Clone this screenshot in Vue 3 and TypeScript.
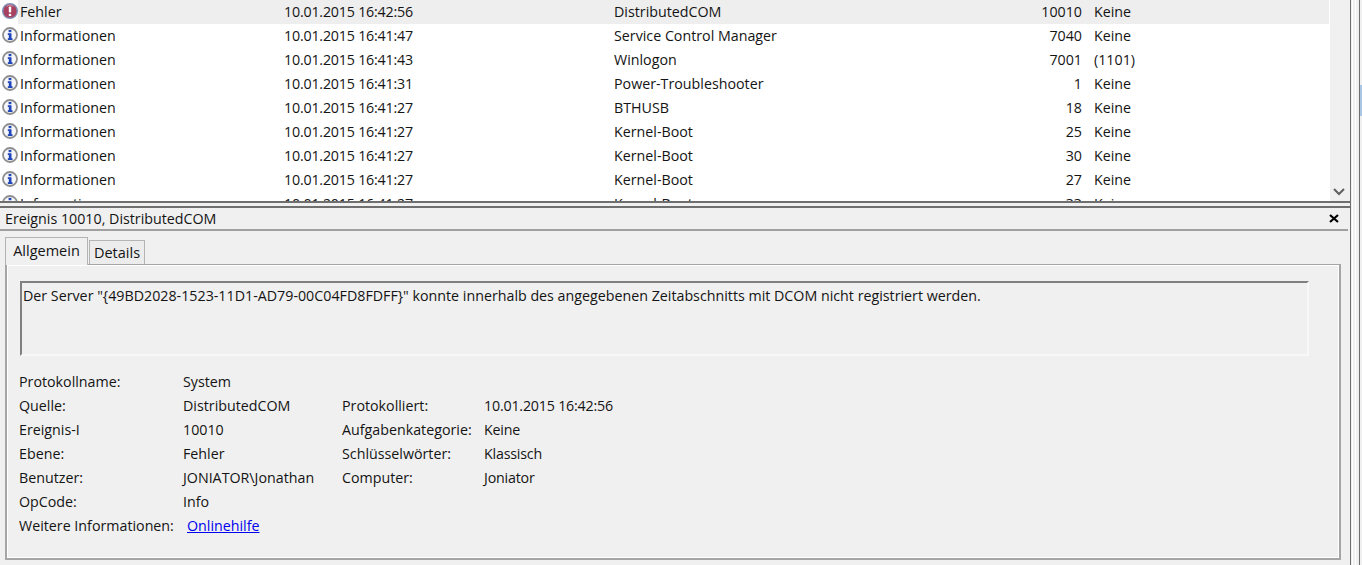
<script setup lang="ts">
interface Row { level: string; date: string; source: string; id: string; cat: string }
const info = 'Informationen'
const rows: Row[] = [
  { level: 'Fehler', date: '10.01.2015 16:42:56', source: 'DistributedCOM', id: '10010', cat: 'Keine' },
  { level: info, date: '10.01.2015 16:41:47', source: 'Service Control Manager', id: '7040', cat: 'Keine' },
  { level: info, date: '10.01.2015 16:41:43', source: 'Winlogon', id: '7001', cat: '(1101)' },
  { level: info, date: '10.01.2015 16:41:31', source: 'Power-Troubleshooter', id: '1', cat: 'Keine' },
  { level: info, date: '10.01.2015 16:41:27', source: 'BTHUSB', id: '18', cat: 'Keine' },
  { level: info, date: '10.01.2015 16:41:27', source: 'Kernel-Boot', id: '25', cat: 'Keine' },
  { level: info, date: '10.01.2015 16:41:27', source: 'Kernel-Boot', id: '30', cat: 'Keine' },
  { level: info, date: '10.01.2015 16:41:27', source: 'Kernel-Boot', id: '27', cat: 'Keine' },
  { level: info, date: '10.01.2015 16:41:27', source: 'Kernel-Boot', id: '33', cat: 'Keine' },
]
const props: [string, string, string, string][] = [
  ['Protokollname:', 'System', '', ''],
  ['Quelle:', 'DistributedCOM', 'Protokolliert:', '10.01.2015 16:42:56'],
  ['Ereignis-I', '10010', 'Aufgabenkategorie:', 'Keine'],
  ['Ebene:', 'Fehler', 'Schlüsselwörter:', 'Klassisch'],
  ['Benutzer:', 'JONIATOR\\Jonathan', 'Computer:', 'Joniator'],
  ['OpCode:', 'Info', '', ''],
]
</script>

<template>
  <div class="app">
    <div class="main">
      <div class="list">
        <div class="rows">
          <div v-for="(r, i) in rows" :key="i" class="row">
            <svg class="icon" width="16" height="16" viewBox="0 0 16 16">
              <template v-if="r.level === 'Fehler'">
                <circle cx="8" cy="8" r="7.3" fill="#a8405f" stroke="#7f90b4" stroke-width="1.4" />
                <path d="M4.6 3.6a4.6 4.6 0 0 1 6.8 0" fill="none" stroke="#cf98aa" stroke-width="1" />
                <rect x="6.8" y="3.4" width="2.4" height="6.2" rx="0.8" fill="#fff" />
                <rect x="6.8" y="10.8" width="2.4" height="2.2" fill="#fff" />
              </template>
              <template v-else>
                <circle cx="8" cy="8" r="7" fill="#f6f7fb" stroke="#8f8f8f" stroke-width="1.8" />
                <rect x="6.6" y="2.9" width="2.8" height="2.3" fill="#1f45b8" />
                <path d="M5.8 6.3h3.7v5h1v1.6H5.8v-1.6h1V7.9h-1z" fill="#1f45b8" />
              </template>
            </svg>
            <div class="cells" :class="{ selected: i === 0 }">
              <span class="level">{{ r.level }}</span>
              <span class="date">{{ r.date }}</span>
              <span class="source">{{ r.source }}</span>
              <span class="id">{{ r.id }}</span>
              <span class="cat">{{ r.cat }}</span>
            </div>
          </div>
        </div>
        <div class="scrollbar">
          <svg width="12" height="8" viewBox="0 0 12 8" class="chev">
            <path d="M1 1l5 5 5-5" fill="none" stroke="#606060" stroke-width="2" />
          </svg>
        </div>
      </div>
      <div class="detail">
        <div class="head">
          <span>Ereignis 10010, DistributedCOM</span>
          <svg width="10" height="9" viewBox="0 0 10 9" class="close">
            <path d="M1 1l8 7M9 1l-8 7" stroke="#000" stroke-width="2.2" fill="none" />
          </svg>
        </div>
        <div class="tabs">
          <div class="tab active">Allgemein</div>
          <div class="tab">Details</div>
        </div>
        <div class="pane">
          <div class="message">Der Server "{49BD2028-1523-11D1-AD79-00C04FD8FDFF}" konnte innerhalb des angegebenen Zeitabschnitts mit DCOM nicht registriert werden.</div>
          <div class="props">
            <div v-for="p in props" :key="p[0]" class="prop">
              <span>{{ p[0] }}</span><span>{{ p[1] }}</span><span>{{ p[2] }}</span><span class="date">{{ p[3] }}</span>
            </div>
            <div class="prop more">
              <span>Weitere Informationen:</span><a href="#" class="link">Onlinehilfe</a>
            </div>
          </div>
        </div>
      </div>
    </div>
    <div class="edge">
      <div class="thumb"></div>
    </div>
  </div>
</template>

<style scoped>
.app {
  width: 1362px;
  height: 565px;
  display: flex;
  overflow: hidden;
  background: #f0f0f0;
  color: #141414;
  font-family: "Open Sans", "Noto Sans", sans-serif;
  font-size: 14.25px;
}
.main {
  width: 1350px;
  flex: none;
  display: flex;
  flex-direction: column;
}
.list {
  height: 201px;
  flex: none;
  display: flex;
  border-bottom: 2px solid #6f6f6f;
  background: #fff;
  overflow: hidden;
}
.rows {
  width: 1330px;
  flex: none;
}
.row {
  height: 24px;
  box-sizing: border-box;
  display: flex;
  align-items: center;
}
.icon {
  width: 16px;
  height: 16px;
  margin: -2px 0 0 2px;
  flex: none;
}
.cells {
  width: 1311px;
  height: 24px;
  display: grid;
  grid-template-columns: 264px 330px 300px 168px 1fr;
  align-items: center;
  padding: 0 0 2px 2px;
  box-sizing: border-box;
}
.selected {
  background: #eeeeee;
}
.date {
  letter-spacing: -0.2px;
}
.id {
  text-align: right;
}
.cat {
  padding-left: 12px;
}
.scrollbar {
  width: 20px;
  flex: none;
  background: #f0f0f0;
  position: relative;
}
.chev {
  position: absolute;
  left: 3px;
  bottom: 5px;
}
.detail {
  margin-top: 3px;
  flex: 1;
  display: flex;
  flex-direction: column;
  border-top: 2px solid #6f6f6f;
}
.head {
  height: 21px;
  display: flex;
  justify-content: space-between;
  align-items: center;
  padding: 0 9px 0 5px;
  border-bottom: 2px solid #a0a0a0;
  margin-right: 2px;
}
.tabs {
  display: flex;
  align-items: flex-end;
  margin-top: 6px;
  padding-left: 5px;
  position: relative;
  z-index: 1;
  margin-bottom: -1px;
}
.tab {
  box-sizing: border-box;
  width: 56px;
  height: 24px;
  border: 1px solid #b4b4b4;
  border-bottom: none;
  background: #ececec;
  display: flex;
  align-items: center;
  justify-content: center;
  margin-left: 1px;
  margin-bottom: 1px;
  font-size: 14.5px;
}
.tab.active {
  width: 83px;
  height: 28px;
  background: #f0f0f0;
  margin-left: 0;
  margin-bottom: 0;
  padding-bottom: 2px;
}
.pane {
  width: 1336px;
  height: 296px;
  box-sizing: border-box;
  margin-left: 5px;
  border: 2px solid #a5a5a5;
  border-top-width: 1px;
  box-shadow: inset 0 0 0 1px #fff;
  padding: 16px 0 0 12px;
}
.message {
  width: 1289px;
  height: 75px;
  margin-left: 1px;
  box-sizing: border-box;
  border: 2px solid #f8f8f8;
  border-top-color: #808080;
  border-left-color: #808080;
  padding: 3px 0 0 1px;
}
.props {
  margin-top: 13px;
}
.prop {
  height: 24px;
  display: grid;
  grid-template-columns: 164px 159px 142px 1fr;
  align-items: center;
}
.prop.more {
  grid-template-columns: 168px 1fr;
}
.link {
  color: #0000ee;
  text-decoration: underline;
}
.edge {
  flex: 1;
  position: relative;
  border-left: 1px solid #6f6f6f;
}
.edge::before {
  content: "";
  position: absolute;
  left: 1px;
  top: 0;
  bottom: 0;
  width: 2px;
  border-left: 1px solid #fff;
  border-right: 1px solid #fff;
}
.edge::after {
  content: "";
  position: absolute;
  right: 2px;
  top: 0;
  bottom: 0;
  width: 1px;
  background: #6f6f6f;
}
.thumb {
  position: absolute;
  right: 0;
  top: 85px;
  width: 2px;
  height: 31px;
  background: #a9c6e4;
}
</style>

<style>
html, body { margin: 0; background: #f0f0f0; }
</style>
